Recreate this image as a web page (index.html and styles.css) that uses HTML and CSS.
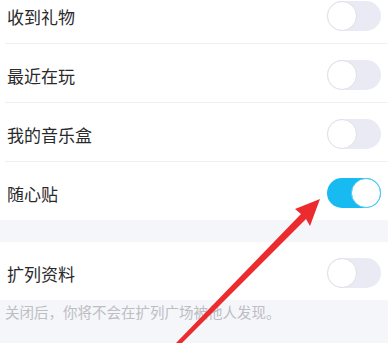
FILE: index.html
```html
<!DOCTYPE html>
<html lang="zh">
<head>
<meta charset="utf-8">
<link rel="stylesheet" href="styles.css">
</head>
<body>
<div class="page">
  <div class="group first">
    <div class="row"><span class="label">收到礼物</span><span class="toggle"></span></div>
    <div class="row"><span class="label">最近在玩</span><span class="toggle"></span></div>
    <div class="row"><span class="label">我的音乐盒</span><span class="toggle"></span></div>
    <div class="row"><span class="label">随心贴</span><span class="toggle on"></span></div>
  </div>
  <div class="group second">
    <div class="row"><span class="label">扩列资料</span><span class="toggle"></span></div>
  </div>
  <p class="note">关闭后，你将不会在扩列广场被他人发现。</p>
  <svg class="arrow" width="388" height="343" viewBox="0 0 388 343">
    <polygon points="320,199 295,209 301,214 176,343 182,343 306,219 310,226" fill="#ec2b2f"/>
  </svg>
</div>
</body>
</html>
```

FILE: styles.css
```css
html, body {
  margin: 0;
  padding: 0;
  background: #f5f6fa;
}
.page {
  position: relative;
  width: 388px;
  height: 343px;
  overflow: hidden;
  font-family: "Noto Sans CJK SC", "Noto Sans", sans-serif;
}
.group {
  background: #fff;
}
.group.first {
  margin-top: -15px;
}
.group.second {
  margin-top: 22px;
}
.row {
  height: 58px;
  display: flex;
  align-items: center;
  justify-content: space-between;
  padding: 0 7px 0 7px;
  position: relative;
}
.row + .row {
  border-top: 1px solid #f0f0f3;
  margin-left: 5px;
  padding-left: 2px;
}
.label {
  font-size: 17px;
  color: #2a2a2c;
  padding-top: 4px;
}
.toggle {
  width: 54px;
  height: 30px;
  border-radius: 15px;
  background: #e9eaf3;
  position: relative;
  margin-top: 3px;
}
.toggle::after {
  content: "";
  position: absolute;
  left: 0;
  top: 0;
  width: 28px;
  height: 28px;
  border-radius: 50%;
  background: #fff;
  border: 1px solid #e0e0e6;
}
.toggle.on {
  background: #17baf1;
}
.toggle.on::after {
  left: auto;
  right: 0;
  border-color: #4cc8f3;
}
.note {
  margin: 0;
  padding: 2px 5px;
  font-size: 14.5px;
  color: #bdbdc2;
  line-height: 20px;
}
.arrow {
  position: absolute;
  left: 0;
  top: 0;
  pointer-events: none;
}
```
